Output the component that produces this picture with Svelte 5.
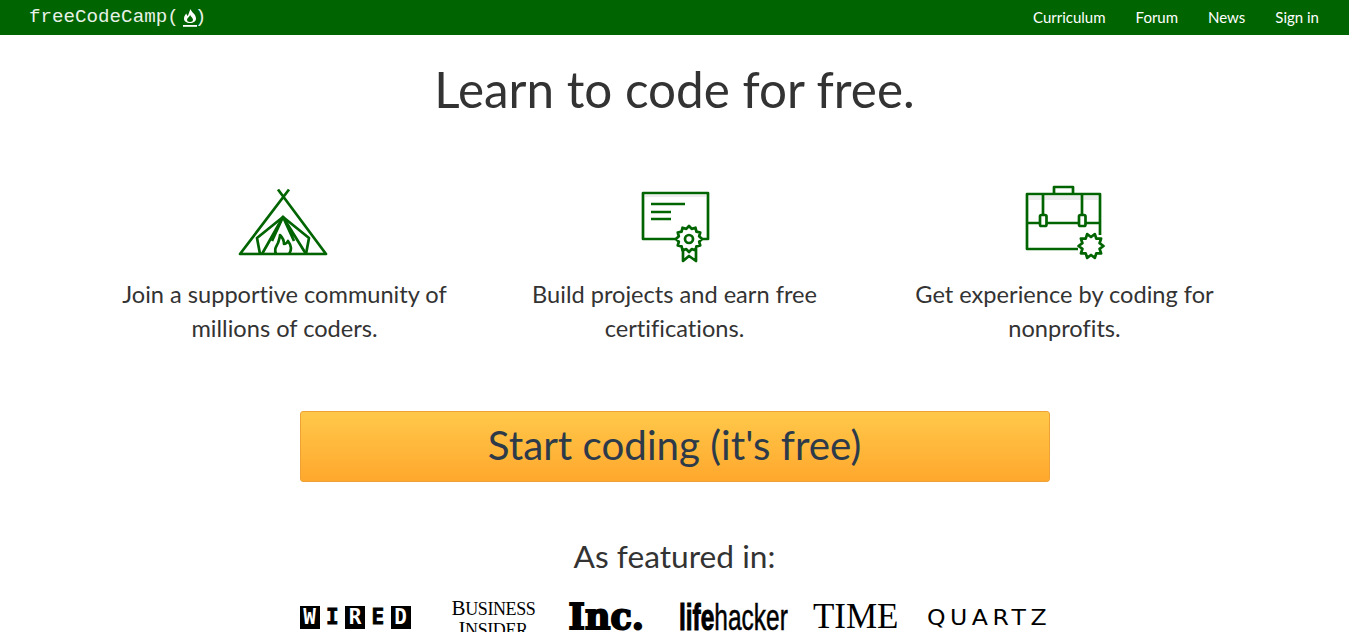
<script lang="ts">
  // scalloped edge for the certificate rosette and the briefcase badge
  function seal(cx: number, cy: number, outer: number, inner: number, points: number) {
    let d = "";
    const steps = points * 2;
    for (let i = 0; i < steps; i++) {
      const r = i % 2 ? inner : outer;
      const a = (i / steps) * Math.PI * 2;
      d += `${i ? "L" : "M"}${(cx + r * Math.cos(a)).toFixed(2)} ${(cy + r * Math.sin(a)).toFixed(2)}`;
    }
    return d + "Z";
  }

  const links = ["Curriculum", "Forum", "News", "Sign in"];
</script>

<nav class="topbar">
  <a class="brand" href="#top">
    <span>freeCodeCamp(</span>
    <svg class="flame-mark" viewBox="0 0 16 20" aria-hidden="true">
      <path d="M8.500 1c.5 3 5.500 5 5.500 9.500 0 2.800-2.500 4.500-6 4.500s-6-1.700-6-4.500c0-2.500 1.500-4 2.500-5 .2 1.500.7 2 1.300 2.500C6.500 6 7.500 3.500 8.500 1z" fill="#fff" />
      <path d="M8.200 7c.5 1.700 2.800 2.800 2.800 4.800 0 1.400-1.300 2.200-3 2.200s-3-.8-3-2.200c0-2 2.500-2.800 3.200-4.800z" fill="#006400" />
      <rect x="1" y="17" width="14" height="1.800" fill="#fff" />
    </svg>
    <span>)</span>
  </a>
  <ul class="links">
    {#each links as link}
      <li><a href="#top">{link}</a></li>
    {/each}
  </ul>
</nav>

<main class="landing">
  <h1>Learn to code for free.</h1>

  <section class="benefits">
    <div class="benefit">
      <svg class="icon" width="120" height="90" viewBox="0 0 120 90" aria-hidden="true">
        <path class="shade" d="M18 72h80v2H18z" />
        <path d="M53 9.500 101 74H15L64 9.500" />
        <path d="M35 74 32 58l26-21 26 21-3 16" />
        <path d="M37 74l21-37 23 37M47 61l11-24 11 24" />
        <path d="M51 74c-2-5 0-7 2-11 1-3 2-6 2-8 3 3 4 6 4 9 2 0 3-1 4-3 3 4 4 9 1 13" />
      </svg>
      <p>Join a supportive community of millions of coders.</p>
    </div>

    <div class="benefit">
      <svg class="icon" width="90" height="90" viewBox="0 0 90 90" aria-hidden="true">
        <path class="shade" d="M15 15h61v2H15z" />
        <path d="M46 59H13V13h65v46h-6" />
        <path d="M21 24h34M21 32h20M21 39h20" />
        <path class="cut" d={seal(59, 59, 13, 10.500, 12)} />
        <circle cx="59" cy="59" r="4" />
        <path d="M53 69v12l6-5 7 5V69" />
      </svg>
      <p>Build projects and earn free certifications.</p>
    </div>

    <div class="benefit">
      <svg class="icon" width="90" height="90" viewBox="0 0 90 90" aria-hidden="true">
        <path class="shade" d="M9 16h69v4H9z" />
        <path d="M58 69H7V14h73v41" />
        <path d="M34 14V7h19v7M7 43h73M23 14v21M62 14v21" />
        <rect class="cut" x="20" y="35" width="6.500" height="11" rx="1.500" />
        <rect class="cut" x="59" y="35" width="6.500" height="11" rx="1.500" />
        <path class="cut" d={seal(71, 66, 12.500, 9, 10)} />
      </svg>
      <p>Get experience by coding for nonprofits.</p>
    </div>
  </section>

  <button class="cta" type="button">Start coding (it's free)</button>

  <h2>As featured in:</h2>

  <div class="press">
    <span class="wired">
      <b class="solid">W</b><b>I</b><b class="solid">R</b><b>E</b><b class="solid">D</b>
    </span>
    <span class="insider"><span>Business</span><span>Insider</span></span>
    <span class="inc">Inc.</span>
    <span class="lifehacker"><span><b>life</b>hacker</span></span>
    <span class="time">TIME</span>
    <span class="quartz"><span>QUARTZ</span></span>
  </div>
</main>

<style>
  :global(body) {
    font-family: Lato, "Noto Sans", sans-serif;
    font-variant-ligatures: none;
    color: #333;
    background: #fff;
  }

  .topbar {
    height: 35px;
    background: #006400;
    display: flex;
    align-items: center;
    justify-content: space-between;
    padding: 0 15px 0 29px;
  }

  .brand {
    display: flex;
    align-items: center;
    color: #e8f1e8;
    text-decoration: none;
    font-family: "Liberation Mono", monospace;
    font-size: 19.200px;
    height: 35px;
    padding-bottom: 1px;
    box-sizing: border-box;
  }

  .flame-mark {
    width: 16px;
    height: 20px;
    margin: 1px -3px 0 3px;
  }

  .links {
    list-style: none;
    display: flex;
    margin: 0 0 2px;
    padding: 0;
  }

  .links a {
    display: block;
    padding: 0 15px;
    color: #fff;
    text-decoration: none;
    font-size: 15px;
  }

  .landing {
    display: flex;
    flex-direction: column;
    align-items: center;
  }

  h1 {
    margin: 23px 0 0;
    font-size: 49.400px;
    line-height: 62px;
    font-weight: 400;
  }

  .benefits {
    width: 1170px;
    margin-top: 60px;
    display: grid;
    grid-template-columns: repeat(3, 1fr);
  }

  .benefit {
    display: flex;
    flex-direction: column;
    align-items: center;
    padding: 0 15px;
  }

  .icon {
    fill: none;
    stroke: #006400;
    stroke-width: 2.700;
    stroke-linejoin: round;
  }

  .icon .cut {
    fill: #fff;
  }

  .icon .shade {
    fill: #ececec;
    stroke: none;
  }

  .benefit p {
    margin: 7px 0 0;
    max-width: 340px;
    text-align: center;
    font-size: 23.600px;
    line-height: 34px;
  }

  .cta {
    width: 750px;
    height: 71px;
    margin-top: 66px;
    padding-bottom: 5px;
    border: 1px solid #eea236;
    border-radius: 3px;
    background: linear-gradient(#ffc84a, #ffa82d);
    color: #2d3a4a;
    font-family: inherit;
    font-size: 40.300px;
    cursor: pointer;
  }

  h2 {
    margin: 52px 0 0;
    font-size: 31.700px;
    line-height: 44px;
    font-weight: 400;
  }

  .press {
    display: flex;
    align-items: flex-start;
    justify-content: center;
    margin-top: 18px;
    padding-right: 2px;
    color: #000;
  }

  .wired {
    display: flex;
    gap: 2.750px;
    margin: 10px 41px 0 0;
    font-family: "DejaVu Sans Mono", monospace;
    font-size: 21px;
    line-height: 23px;
  }

  .wired b {
    width: 20px;
    height: 23px;
    text-align: center;
    -webkit-text-stroke: 0.8px currentColor;
  }

  .wired .solid {
    background: #000;
    color: #fff;
    -webkit-text-stroke: 0;
  }

  .insider {
    width: 83px;
    margin: 2px 34px 0 0;
    font-family: "Liberation Serif", serif;
    text-transform: uppercase;
    font-size: 18px;
    letter-spacing: -0.4px;
    text-align: center;
    white-space: nowrap;
  }

  .insider span {
    display: block;
    height: 21px;
    line-height: 21px;
  }

  .insider span::first-letter {
    font-size: 21px;
  }

  .inc {
    margin: 1px 35px 0 0;
    font-family: "DejaVu Serif", serif;
    font-weight: 700;
    font-size: 35px;
    line-height: 40px;
    -webkit-text-stroke: 2px #000;
  }

  .lifehacker {
    width: 110px;
    margin: 2px 24px 0 0;
    font-family: "Liberation Sans", sans-serif;
    font-size: 36px;
    line-height: 40px;
    white-space: nowrap;
  }

  .lifehacker > span {
    display: inline-block;
    transform: scaleX(0.68);
    transform-origin: 0 0;
    -webkit-text-stroke: 0.5px #000;
  }

  .lifehacker b {
    -webkit-text-stroke: 1px #000;
  }

  .time {
    margin: 1px 29px 0 0;
    font-family: "Liberation Serif", serif;
    font-size: 35px;
    line-height: 40px;
  }

  .quartz {
    width: 120px;
    margin-top: 7px;
    font-family: "DejaVu Sans", sans-serif;
    font-size: 20.500px;
    line-height: 30px;
    letter-spacing: 3.900px;
    white-space: nowrap;
  }

  .quartz > span {
    display: inline-block;
    transform: scaleX(1.15);
    transform-origin: 0 0;
  }
</style>
